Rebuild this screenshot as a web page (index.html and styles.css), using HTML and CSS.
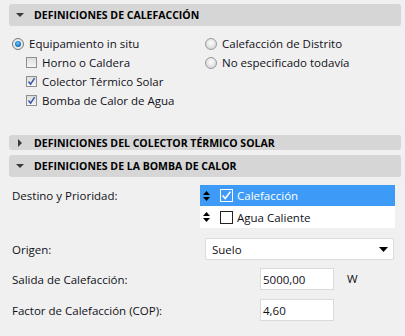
FILE: index.html
```html
<!DOCTYPE html>
<html lang="es">
<head>
<meta charset="utf-8">
<link rel="stylesheet" href="styles.css">
</head>
<body>
<div class="panel">
  <div class="hdr hdr-big"><span class="tri-down"></span><span class="hdr-text">DEFINICIONES DE CALEFACCIÓN</span></div>
  <div class="heat">
    <div class="col col-left">
      <div class="row"><span class="radio on"></span><span>Equipamiento in situ</span></div>
      <div class="row sub"><span class="chk"></span><span>Horno o Caldera</span></div>
      <div class="row sub"><span class="chk checked"><svg viewBox="0 0 11 11" width="11" height="11"><path d="M2.5 5.5 L4.6 8.2 L8.6 2.2" fill="none" stroke="#3a56a8" stroke-width="1.5"/></svg></span><span>Colector Térmico Solar</span></div>
      <div class="row sub"><span class="chk checked"><svg viewBox="0 0 11 11" width="11" height="11"><path d="M2.5 5.5 L4.6 8.2 L8.6 2.2" fill="none" stroke="#3a56a8" stroke-width="1.5"/></svg></span><span>Bomba de Calor de Agua</span></div>
    </div>
    <div class="col col-right">
      <div class="row"><span class="radio"></span><span>Calefacción de Distrito</span></div>
      <div class="row"><span class="radio"></span><span>No especificado todavía</span></div>
    </div>
  </div>
  <div class="hdr hdr-small"><span class="tri-right"></span><span class="hdr-text">DEFINICIONES DEL COLECTOR TÉRMICO SOLAR</span></div>
  <div class="hdr hdr-big hdr-gap"><span class="tri-down"></span><span class="hdr-text">DEFINICIONES DE LA BOMBA DE CALOR</span></div>
  <div class="pump">
    <div class="frow frow-list">
      <span class="lbl">Destino y Prioridad:</span>
      <div class="list">
        <div class="litem sel">
          <svg class="ud" viewBox="0 0 7 10" width="7" height="10"><path d="M3.5 0 L7 4 L0 4Z M0 6 L7 6 L3.5 10Z" fill="#000"/></svg>
          <span class="lchk lchk-on"><svg viewBox="0 0 13 13" width="13" height="13"><path d="M2.6 6.6 L5.2 9.6 L10.4 2.8" fill="none" stroke="#fff" stroke-width="1.6"/></svg></span>
          <span>Calefacción</span>
        </div>
        <div class="litem">
          <svg class="ud" viewBox="0 0 7 10" width="7" height="10"><path d="M3.5 0 L7 4 L0 4Z M0 6 L7 6 L3.5 10Z" fill="#000"/></svg>
          <span class="lchk"></span>
          <span>Agua Caliente</span>
        </div>
      </div>
    </div>
    <div class="frow frow-origen">
      <span class="lbl">Origen:</span>
      <div class="select"><span>Suelo</span><svg viewBox="0 0 9 5" width="9" height="5"><path d="M0 0 L9 0 L4.5 5Z" fill="#000"/></svg></div>
    </div>
    <div class="frow frow-salida">
      <span class="lbl">Salida de Calefacción:</span>
      <div class="input">5000,00</div>
      <span class="unit">W</span>
    </div>
    <div class="frow frow-factor">
      <span class="lbl">Factor de Calefacción (COP):</span>
      <div class="input">4,60</div>
    </div>
  </div>
</div>
</body>
</html>
```

FILE: styles.css
```css
* { box-sizing: border-box; }
html, body {
  margin: 0;
  padding: 0;
  background: #f0f0f0;
}
body {
  font-family: "Open Sans", "Noto Sans", sans-serif;
  font-size: 11.5px;
  color: #101018;
  width: 405px;
  height: 336px;
  overflow: hidden;
}
.panel {
  padding-top: 4px;
}
.hdr {
  margin-left: 9px;
  width: 392px;
  background: #d6d6d6;
  border-radius: 3px;
  display: flex;
  align-items: center;
  font-weight: 700;
  font-size: 10.5px;
  color: #000;
}
.hdr-big { height: 22px; }
.hdr-small { height: 15px; margin-top: 25px; }
.hdr-gap { margin-top: 5px; }
.tri-down {
  width: 0; height: 0;
  margin-left: 7px;
  margin-right: 10px;
  border-left: 4px solid transparent;
  border-right: 4px solid transparent;
  border-top: 4px solid #3a3a3a;
}
.tri-right {
  width: 0; height: 0;
  margin-left: 9px;
  margin-right: 12px;
  border-top: 4px solid transparent;
  border-bottom: 4px solid transparent;
  border-left: 4px solid #3a3a3a;
}
.heat {
  display: flex;
  padding-top: 8px;
}
.col-left { width: 205px; padding-left: 12px; }
.col-right { flex: 1; }
.row {
  height: 19px;
  display: flex;
  align-items: center;
}
.row.sub { padding-left: 14px; }
.radio {
  width: 12px;
  height: 12px;
  border-radius: 50%;
  border: 1px solid #9a9a9a;
  background: radial-gradient(circle at 50% 40%, #fdfdfd 0%, #dcdcdc 70%, #c8c8c8 100%);
  margin-right: 5px;
  position: relative;
  flex: none;
}
.radio.on {
  border-color: #7a7a7a;
  background: radial-gradient(circle at 50% 50%, #f8f8f8 0%, #e0e0e0 100%);
}
.radio.on::after {
  content: "";
  position: absolute;
  left: 2px; top: 2px;
  width: 6px; height: 6px;
  border-radius: 50%;
  background: radial-gradient(circle at 45% 40%, #6fd0ff 0%, #1b7cc8 55%, #0d3f77 100%);
}
.chk {
  width: 11px;
  height: 11px;
  border: 1px solid #8e8e8e;
  background: linear-gradient(#dedede, #f6f6f6);
  margin-right: 5px;
  flex: none;
  display: flex;
  align-items: center;
  justify-content: center;
}
.chk svg { display: block; margin: -1px; }
.pump { padding-left: 12px; }
.frow {
  display: flex;
  align-items: center;
}
.lbl { flex: none; }
.frow-list {
  margin-top: 8px;
  align-items: flex-start;
}
.frow-list .lbl { width: 188px; padding-top: 3px; }
.list {
  width: 195px;
  background: #fff;
}
.litem {
  height: 21px;
  display: flex;
  align-items: center;
  padding-left: 3px;
}
.litem + .litem { height: 22px; }
.litem.sel { background: #3d9bf7; color: #fff; }
.ud { display: block; flex: none; margin-right: 10px; }
.lchk {
  width: 13px;
  height: 13px;
  border: 1px solid #222;
  background: #fff;
  margin-right: 4px;
  flex: none;
  display: flex;
  align-items: center;
  justify-content: center;
}
.lchk-on { border-color: #fff; background: #3d9bf7; }
.lchk svg { display: block; margin: -1px; }
.frow-origen { margin-top: 10px; }
.frow-origen .lbl { width: 193px; }
.select {
  width: 189px;
  height: 22px;
  background: #fff;
  border: 1px solid #dcdcdc;
  border-radius: 2px;
  display: flex;
  align-items: center;
  justify-content: space-between;
  padding-left: 6px;
  padding-right: 5px;
}
.select svg { display: block; }
.frow-salida { margin-top: 8px; }
.frow-factor { margin-top: 9px; }
.frow-salida .lbl, .frow-factor .lbl { width: 248px; }
.input {
  width: 74px;
  height: 22px;
  background: #fff;
  border: 1px solid #dadada;
  display: flex;
  align-items: center;
  padding-left: 2px;
}
.unit { margin-left: 13px; margin-top: -2px; }
```
